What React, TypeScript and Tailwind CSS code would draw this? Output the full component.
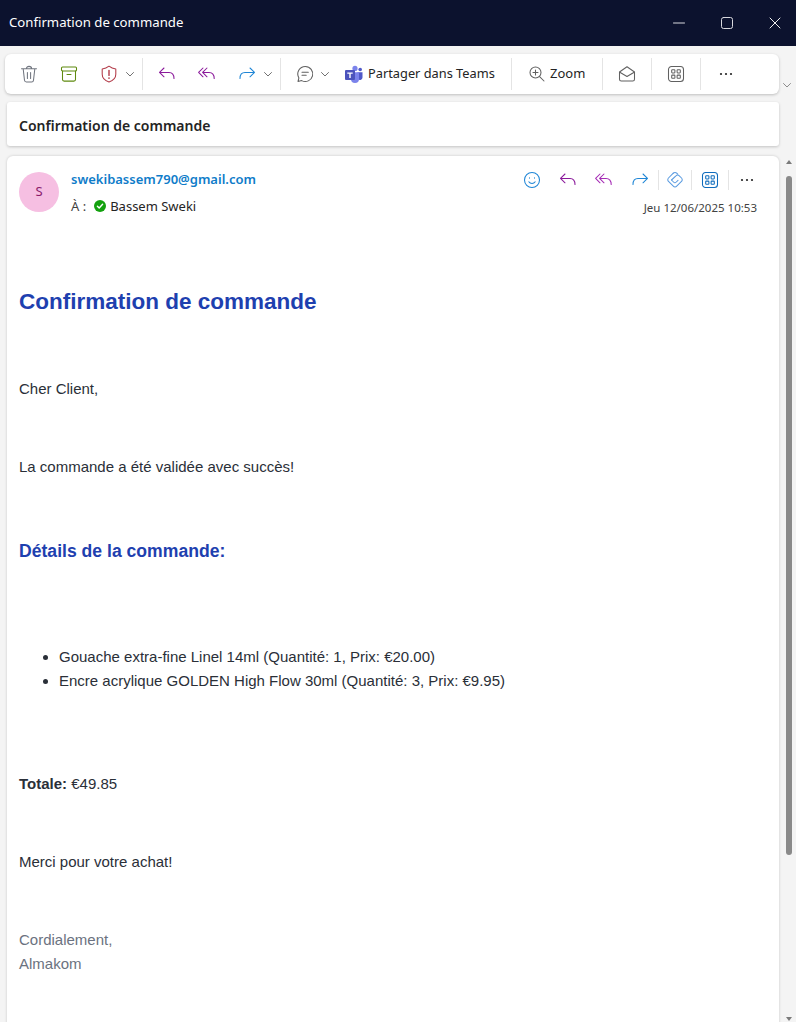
import React from "react";

const ui = "font-['Noto_Sans','Open_Sans',sans-serif]";

function Ic({ w = 20, h = 20, children, sw = 1.05, c = "#616161" }: { w?: number; h?: number; children: React.ReactNode; sw?: number; c?: string }) {
  return (
    <svg width={w} height={h} viewBox={`0 0 ${w} ${h}`} fill="none" stroke={c} strokeWidth={sw} strokeLinecap="round" strokeLinejoin="round">
      {children}
    </svg>
  );
}

const Trash = () => (
  <Ic c="#70757f">
    <path d="M2.500 4.800h15M7.400 4.600c0-3 5.200-3 5.200 0M4.200 5l1.300 11.300c.1 1 .8 1.700 1.900 1.700h5.200c1.100 0 1.800-.7 1.900-1.700L15.800 5M8.400 8.500v6M11.600 8.500v6" />
  </Ic>
);
const Archive = () => (
  <Ic c="#5f8a0f">
    <rect x="2.500" y="3" width="15" height="4" rx="1" />
    <path d="M3.500 7v8.500c0 1 .7 1.600 1.600 1.600h9.800c.9 0 1.600-.6 1.600-1.600V7M8 10.500h4" />
  </Ic>
);
const Shield = () => (
  <Ic c="#b23a48">
    <path d="M10 2.200c2 1.700 4 2.500 6.800 2.700v5.300c0 3.500-2.300 6.200-6.800 7.800-4.500-1.600-6.800-4.300-6.800-7.800V4.900C6 4.700 8 3.900 10 2.200Z" />
    <path d="M10 6.400v5" strokeWidth="1.400" />
    <path d="M10 14v.2" strokeWidth="1.600" />
  </Ic>
);
const Chev = ({ c = "#616161" }: { c?: string }) => (
  <Ic w={10} h={10} c={c} sw={0.9}>
    <path d="M1.500 3.500 5 7l3.500-3.500" />
  </Ic>
);
const Reply = ({ c = "#8b1a9b" }: { c?: string }) => (
  <Ic c={c}>
    <path d="M7 4 2.500 8.400 7 12.800M2.700 8.400h9.300c3.200 0 5 2 5 6.100" />
  </Ic>
);
const ReplyAll = ({ c = "#8b1a9b" }: { c?: string }) => (
  <Ic c={c}>
    <path d="M6 4 1.600 8.400 6 12.800M10 4 5.600 8.400 10 12.800M5.800 8.400H12c3.300 0 5.200 2 5.200 6.100" />
  </Ic>
);
const Forward = ({ c = "#1f86d6" }: { c?: string }) => (
  <Ic c={c}>
    <path d="M13 4l4.500 4.400L13 12.800M17.300 8.400H8c-3.200 0-5 2-5 6.100" />
  </Ic>
);
const Chat = () => (
  <Ic c="#616161">
    <path d="M10.300 2.500a7.500 7.500 0 1 1-3.600 14.100L3 17.500l.9-3.600a7.500 7.500 0 0 1 6.400-11.400Z" />
    <path d="M7 8.200h6.300M7 11.300h4.200" />
  </Ic>
);
const Teams = () => (
  <svg width="18" height="18" viewBox="0 0 18 18">
    <circle cx="10" cy="3.400" r="2.600" fill="#7b83eb" />
    <circle cx="15.200" cy="4.500" r="1.800" fill="#5059c9" />
    <path d="M12.500 7.200h5v5.300a2.500 2.500 0 0 1-4.700 1.200Z" fill="#5059c9" />
    <path d="M6 7.200h8v6.800a4 4 0 0 1-8 0Z" fill="#7b83eb" />
    <rect x="0" y="5" width="10" height="10" rx="1" fill="#4b53bc" />
    <path d="M2.300 7.500h5.400v1.200H5.700v4.300H4.300V8.700h-2Z" fill="#fff" />
  </svg>
);
const ZoomIc = () => (
  <Ic w={18} h={18} c="#616161">
    <circle cx="7.500" cy="7.500" r="5.500" />
    <path d="M11.600 11.600 16 16M5 7.500h5M7.500 5v5" />
  </Ic>
);
const MailOpen = () => (
  <Ic c="#616161">
    <path d="M2.500 8 10 2.800 17.500 8v7.200c0 1-.8 1.800-1.800 1.800H4.300c-1 0-1.800-.7-1.800-1.800Z" />
    <path d="M2.800 8.200 10 12.500l7.200-4.300" />
  </Ic>
);
const Apps = ({ c = "#616161" }: { c?: string }) => (
  <Ic c={c}>
    <rect x="2.500" y="2.500" width="15" height="15" rx="3" />
    <rect x="5.700" y="5.700" width="3.200" height="3.200" rx=".6" />
    <rect x="11.100" y="5.700" width="3.200" height="3.200" rx=".6" />
    <rect x="5.700" y="11.100" width="3.200" height="3.200" rx=".6" />
    <rect x="11.100" y="11.100" width="3.200" height="3.200" rx=".6" />
  </Ic>
);
const Dots = () => (
  <svg width="14" height="4" viewBox="0 0 14 4" fill="#242424">
    <circle cx="2" cy="2" r="1.100" />
    <circle cx="7" cy="2" r="1.100" />
    <circle cx="12" cy="2" r="1.100" />
  </svg>
);
const Smile = () => (
  <Ic c="#1f86d6">
    <circle cx="10" cy="10" r="7.500" />
    <path d="M6.800 11.800c1.600 2.200 4.800 2.200 6.400 0M7.500 7.800v.3M12.500 7.800v.3" />
  </Ic>
);
const Loop = () => (
  <Ic c="#5a9be0">
    <path d="M8.300 3.200 3.500 8a2.400 2.400 0 0 0 0 3.400l4.800 4.800a2.400 2.400 0 0 0 3.400 0l4.800-4.800a2.400 2.400 0 0 0 0-3.400l-2.200-2.200a2.400 2.400 0 0 0-3.400 0L6.500 10" />
    <path d="M8.300 3.200a2.400 2.400 0 0 1 3.400 0l1 1M6.500 10l2 2a2 2 0 0 0 2.800 0l1.700-1.700" />
  </Ic>
);
const Check = () => (
  <svg width="12" height="12" viewBox="0 0 12 12">
    <circle cx="6" cy="6" r="6" fill="#13a10e" />
    <path d="M3.400 6.200 5.200 8l3.400-3.700" fill="none" stroke="#fff" strokeWidth="1.400" strokeLinecap="round" strokeLinejoin="round" />
  </svg>
);

const Slot = ({ children, w = "w-10" }: { children: React.ReactNode; w?: string }) => (
  <div className={`flex h-full shrink-0 items-center justify-center ${w}`}>{children}</div>
);
const Sep = ({ c = "bg-[#e4e4e4]", h = "h-8" }: { c?: string; h?: string }) => <div className={`w-px shrink-0 ${h} ${c}`} />;

function Toolbar() {
  return (
    <div className="flex h-10 w-[774px] shrink-0 items-center rounded-md bg-white pl-1 shadow-[0_1px_3px_rgba(0,0,0,0.22)]">
      <Slot><Trash /></Slot>
      <Slot><Archive /></Slot>
      <Slot><Shield /></Slot>
      <div className="ml-[-4px] flex w-[10px] justify-center"><Chev /></div>
      <div className="ml-[7px]"><Sep /></div>
      <div className="ml-1 flex h-full">
        <Slot><Reply /></Slot>
        <Slot><ReplyAll /></Slot>
        <Slot><Forward /></Slot>
      </div>
      <div className="ml-[-4px] flex w-[10px] justify-center"><Chev /></div>
      <div className="ml-[7px]"><Sep /></div>
      <div className="ml-1 flex h-full">
        <Slot><Chat /></Slot>
      </div>
      <div className="ml-[-5px] flex w-[10px] justify-center"><Chev /></div>
      <div className="ml-[15px] flex items-center">
        <Teams />
        <span className="ml-[5px] w-[127px] whitespace-nowrap text-[12.8px] text-[#242424]">Partager dans Teams</span>
      </div>
      <div className="ml-4"><Sep /></div>
      <div className="ml-4 flex items-center">
        <ZoomIc />
        <span className="ml-1 w-9 whitespace-nowrap text-[13px] text-[#242424]">Zoom</span>
      </div>
      <div className="ml-4"><Sep /></div>
      <Slot w="w-[48px]"><MailOpen /></Slot>
      <Sep />
      <Slot w="w-[48px]"><Apps /></Slot>
      <Sep />
      <Slot w="w-[50px]"><Dots /></Slot>
    </div>
  );
}

function Header() {
  return (
    <div className="flex pl-3 pr-[15px] pt-4">
      <div className="flex h-10 w-10 shrink-0 items-center justify-center rounded-full bg-[#f6bfe2] text-[13px] text-[#8a1a6b]">S</div>
      <div className="ml-3 flex flex-col">
        <div className="mt-[-1px] h-4 text-[13px] font-semibold leading-4 text-[#0f7cc9]">swekibassem790@gmail.com</div>
        <div className="mt-[11px] flex h-4 items-center text-[13px] leading-4 text-[#242424]">
          <span className="text-[#424242]">À :</span>
          <span className="ml-2"><Check /></span>
          <span className="ml-1">Bassem Sweki</span>
        </div>
      </div>
      <div className="ml-auto mt-[-4px] flex flex-col items-end">
        <div className="flex h-6 items-center">
          <Slot w="w-9"><Smile /></Slot>
          <Slot w="w-9"><Reply /></Slot>
          <Slot w="w-9"><ReplyAll c="#a52bb5" /></Slot>
          <Slot w="w-9"><Forward /></Slot>
          <Sep h="h-5" />
          <Slot w="w-8"><Loop /></Slot>
          <Sep h="h-5" />
          <Slot w="w-9"><Apps c="#0f6cbd" /></Slot>
          <Sep h="h-5" />
          <Slot w="w-[35px]"><Dots /></Slot>
        </div>
        <div className="mr-[7px] mt-[8px] text-[11.5px] leading-4 text-[#424242]">Jeu 12/06/2025 10:53</div>
      </div>
    </div>
  );
}

function Body() {
  return (
    <div className="px-3 font-['Liberation_Sans',Arial,sans-serif] text-[15px] leading-6 text-[#2a2f38]">
      <h1 className="mt-[71px] text-[22.5px] font-bold leading-[30px] text-[#1e40af]">Confirmation de commande</h1>
      <p className="mt-[60px]">Cher Client,</p>
      <p className="mt-[54px]">La commande a été validée avec succès!</p>
      <h2 className="mt-[60px] text-[17.6px] font-bold leading-6 text-[#1e40af]">Détails de la commande:</h2>
      <ul className="mt-[82px] list-disc pl-10">
        <li>Gouache extra-fine Linel 14ml (Quantité: 1, Prix: €20.00)</li>
        <li>Encre acrylique GOLDEN High Flow 30ml (Quantité: 3, Prix: €9.95)</li>
      </ul>
      <p className="mt-[79px]"><strong>Totale:</strong> €49.85</p>
      <p className="mt-[54px]">Merci pour votre achat!</p>
      <p className="mt-[54px] text-[#6b7280]">Cordialement,<br />Almakom</p>
    </div>
  );
}

function Scrollbar() {
  return (
    <div className="flex h-full w-[17px] shrink-0 flex-col items-center pl-0.5 pt-[4px]">
      <div className="h-0 w-0 border-x-[3px] border-b-[4px] border-x-transparent border-b-[#7a7a7a]" />
      <div className="mt-[12px] h-[679px] w-1.5 rounded-full bg-[#8a8a8a]" />
      <div className="mt-auto mb-[1px] h-0 w-0 border-x-[3px] border-t-[4px] border-x-transparent border-t-[#7a7a7a]" />
    </div>
  );
}

export default function App() {
  return (
    <div className={`flex h-[1022px] w-[796px] flex-col overflow-hidden bg-[#f4f4f4] ${ui}`}>
      <div className="flex h-[46px] shrink-0 items-center bg-[#0c122e] pl-[9px] pr-[15px] text-white">
        <span className="text-[13.2px]">Confirmation de commande</span>
        <div className="ml-auto flex items-center gap-9">
          <Ic w={12} h={12} c="#d8d8de" sw={1}><path d="M0.500 6h11" /></Ic>
          <Ic w={12} h={12} c="#d8d8de" sw={1}><rect x=".5" y=".5" width="11" height="11" rx="2" /></Ic>
          <Ic w={12} h={12} c="#f0f0f0" sw={1}><path d="M1 1l10 10M11 1 1 11" /></Ic>
        </div>
      </div>
      <div className="mt-2 flex h-10 shrink-0 pl-[5px]">
        <Toolbar />
        <div className="ml-[3px] mt-[26px]"><Chev c="#808080" /></div>
      </div>
      <div className="ml-[7px] mt-2 flex h-11 w-[772px] shrink-0 items-center rounded-[3px] bg-white pl-3 pt-[3px] text-[14px] font-semibold text-[#242424] shadow-[0_1px_3px_rgba(0,0,0,0.2)]">
        Confirmation de commande
      </div>
      <div className="mt-2.5 flex min-h-0 flex-1 pl-[7px]">
        <div className="h-[880px] w-[772px] shrink-0 rounded-md bg-white shadow-[0_0_3px_rgba(0,0,0,0.18)]">
          <Header />
          <Body />
        </div>
        <Scrollbar />
      </div>
    </div>
  );
}
